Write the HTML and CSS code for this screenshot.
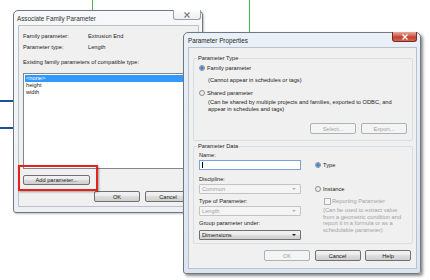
FILE: index.html
```html
<!DOCTYPE html>
<html lang="en">
<head>
    <meta charset="UTF-8">
    <title>Associate Family Parameter</title>
    <link rel="stylesheet" href="styles.css">
</head>
<body>
<div class="desk">
    <!-- sketch lines behind the dialogs -->
    <span class="wire wire-green wire-a"></span>
    <span class="wire wire-green wire-b"></span>
    <span class="wire wire-blue wire-c"></span>
    <span class="wire wire-blue wire-d"></span>
    <span class="grip grip-c"></span>
    <span class="grip grip-d"></span>

    <div class="window assoc">
        <div class="titlebar">
            <span class="title">Associate Family Parameter</span>
            <span class="close close-idle">
                <svg width="8" height="6" viewBox="0 0 8 6"><path d="M1.5 0.5 L6.5 5.5 M6.5 0.5 L1.5 5.5" stroke="#7d7d7d" stroke-width="1.2" fill="none"/></svg>
            </span>
        </div>
        <div class="panel">
            <div class="info-row"><span class="info-label">Family parameter:</span><span>Extrusion End</span></div>
            <div class="info-row"><span class="info-label">Parameter type:</span><span>Length</span></div>
            <div class="list-caption">Existing family parameters of compatible type:</div>
            <ul class="listbox">
                <li class="selected">&lt;none&gt;</li>
                <li>height</li>
                <li>width</li>
            </ul>
            <div class="add-row"><button class="btn btn-add">Add parameter...</button></div>
            <div class="footer">
                <button class="btn">OK</button>
                <button class="btn">Cancel</button>
            </div>
            <span class="callout"></span>
        </div>
    </div>

    <div class="window props">
        <div class="titlebar">
            <span class="title">Parameter Properties</span>
            <span class="close close-hot">
                <svg width="8" height="6" viewBox="0 0 8 6"><path d="M1.5 0.5 L6.5 5.5 M6.5 0.5 L1.5 5.5" stroke="#fff" stroke-width="1.4" fill="none"/></svg>
            </span>
        </div>
        <div class="panel">
            <fieldset class="group group-type">
                <legend>Parameter Type</legend>
                <div class="option"><span class="radio on"></span>Family parameter</div>
                <div class="hint">(Cannot appear in schedules or tags)</div>
                <div class="option option-shared"><span class="radio"></span>Shared parameter</div>
                <div class="hint hint-shared">(Can be shared by multiple projects and families, exported to ODBC, and<br>appear in schedules and tags)</div>
                <div class="group-buttons">
                    <button class="btn" disabled>Select...</button>
                    <button class="btn" disabled>Export...</button>
                </div>
            </fieldset>

            <fieldset class="group group-data">
                <legend>Parameter Data</legend>
                <div class="data-cols">
                    <div class="fields">
                        <div class="field-label">Name:</div>
                        <div class="textbox"><span class="caret"></span></div>
                        <div class="field-label spaced">Discipline:</div>
                        <div class="dropdown disabled">Common</div>
                        <div class="field-label">Type of Parameter:</div>
                        <div class="dropdown disabled">Length</div>
                        <div class="field-label">Group parameter under:</div>
                        <div class="dropdown">Dimensions</div>
                    </div>
                    <div class="scope">
                        <div class="option option-type"><span class="radio on"></span>Type</div>
                        <div class="option option-instance"><span class="radio"></span>Instance</div>
                        <div class="check-row"><span class="checkbox"></span>Reporting Parameter</div>
                        <div class="scope-note">(Can be used to extract value<br>from a geometric condition and<br>report it in a formula or as a<br>schedulable parameter)</div>
                    </div>
                </div>
            </fieldset>

            <div class="footer">
                <button class="btn" disabled>OK</button>
                <button class="btn">Cancel</button>
                <button class="btn">Help</button>
            </div>
        </div>
    </div>
</div>
</body>
</html>
```

FILE: styles.css
```css
* {
    box-sizing: border-box;
}

html, body {
    margin: 0;
    padding: 0;
}

body {
    width: 430px;
    height: 280px;
    overflow: hidden;
    background-color: #fff;
    font-family: "Liberation Sans", Arial, sans-serif;
    font-size: 5.7px;
    color: #1b1b1b;
}

.desk {
    position: relative;
    width: 430px;
    height: 280px;
}

/* sketch lines */
.wire {
    position: absolute;
    display: block;
}

.wire-green {
    width: 1px;
    background-color: #48b04f;
}

.wire-a {
    left: 92px;
    top: 0;
    height: 10px;
}

.wire-b {
    left: 249px;
    top: 0;
    height: 32px;
}

.wire-blue {
    height: 2px;
    left: 0;
    width: 14px;
    background-color: #1d4f9c;
}

.wire-c {
    top: 100px;
}

.wire-d {
    top: 127px;
}

.grip {
    position: absolute;
    left: 13px;
    width: 4px;
    height: 5px;
    background-color: #8fb4e4;
}

.grip-c {
    top: 99px;
}

.grip-d {
    top: 126px;
}

/* windows */
.window {
    position: absolute;
    border: 1px solid #6f7780;
    border-radius: 5px 5px 3px 3px;
    display: flex;
    flex-direction: column;
}

.assoc {
    left: 13px;
    top: 10px;
    width: 190px;
    height: 203px;
    padding: 0 3px 5px 4px;
    background: linear-gradient(#f7f8fa, #eceff3);
    box-shadow: 1px 1px 2px rgba(0, 0, 0, 0.25);
}

.props {
    left: 183px;
    top: 32px;
    width: 238px;
    height: 242px;
    padding: 0 3px 4px 4px;
    background: linear-gradient(#e9f0f8, #dbe5f1);
    box-shadow: 2px 2px 3px rgba(0, 0, 0, 0.45);
}

.titlebar {
    height: 14px;
    display: flex;
    align-items: center;
    flex: none;
}

.title {
    font-size: 6.3px;
    color: #1e1e1e;
}

.assoc .title {
    margin-left: -1px;
    color: #333;
}

.close {
    position: absolute;
    top: -1px;
    display: flex;
    align-items: center;
    justify-content: center;
    height: 10px;
    border-radius: 0 0 3px 3px;
}

.close-idle {
    right: 1px;
    width: 28px;
    border: 1px solid #9a9fa6;
    border-top: none;
    background: linear-gradient(#fdfdfd, #eceef0);
}

.close-hot {
    right: 3px;
    width: 25px;
    border: 1px solid #7b2a20;
    border-top: none;
    background: linear-gradient(#e9a99c, #d0604f 45%, #c0402c 55%, #cf6a55);
}

.panel {
    position: relative;
    flex: 1;
    background-color: #f0f0f0;
    border: 1px solid #b9c2cc;
}

/* associate dialog */
.assoc .panel {
    padding: 5px 7px 0 4px;
}

.info-row {
    display: flex;
    height: 11px;
    line-height: 11px;
}

.info-label {
    width: 65px;
}

.list-caption {
    margin-top: 5px;
    line-height: 8px;
}

.listbox {
    list-style: none;
    margin: 7px 0 0 0;
    padding: 1px 0 0 1px;
    width: 171px;
    height: 96px;
    background-color: #fff;
    border: 1px solid #828790;
}

.listbox li {
    height: 6.8px;
    line-height: 6.8px;
    padding-left: 1px;
}

.listbox .selected {
    background-color: #3399ff;
    color: #fff;
    width: 165px;
}

.add-row {
    margin-top: 6px;
}

.btn {
    height: 11px;
    width: 46px;
    padding: 0;
    font-family: inherit;
    font-size: 5.7px;
    color: #1b1b1b;
    border: 1px solid #707070;
    border-radius: 2px;
    background: linear-gradient(#f3f3f3, #ebebeb 45%, #dddddd 50%, #cfcfcf);
}

.btn:disabled {
    color: #a3a3a3;
    border-color: #adb2b5;
    background: #f4f4f4;
}

.btn-add {
    width: 67px;
    height: 10px;
}

.assoc .footer {
    display: flex;
    justify-content: flex-end;
    gap: 5px;
    margin-top: 6px;
}

.callout {
    position: absolute;
    left: -1px;
    top: 139px;
    width: 80px;
    height: 26px;
    border: 2px solid #e3211d;
    box-shadow: 1px 1px 2px rgba(0, 0, 0, 0.35);
}

/* parameter properties dialog */
.props .panel {
    padding: 6px 5px 0 4px;
}

.group {
    margin: 0;
    width: 220px;
    padding: 0 5px 6px 4px;
    border: 1px solid #d5dfe5;
    border-radius: 2px;
}

.group legend {
    padding: 0 1px;
    margin-left: -1px;
    line-height: 8px;
    color: #222;
}

.option {
    display: flex;
    align-items: center;
    gap: 2px;
    height: 8px;
    margin-top: 2px;
}

.radio {
    flex: none;
    width: 6px;
    height: 6px;
    margin-left: 1px;
    border-radius: 50%;
    border: 1px solid #8e8f8f;
    background: radial-gradient(circle, #ffffff, #d6d6d6);
}

.radio.on {
    background: radial-gradient(circle, #2f7fd8 0, #3a86da 1.3px, #a8c8ee 2.2px, #eef3fa 3px);
}

.hint {
    margin-top: 4px;
    margin-left: 10px;
    line-height: 8px;
}

.option-shared {
    margin-top: 5px;
}

.hint-shared {
    margin-top: 2px;
    line-height: 7px;
}

.group-buttons {
    display: flex;
    justify-content: flex-end;
    gap: 5px;
    margin-top: 10px;
}

.group-data {
    margin-top: 1px;
    padding-bottom: 3px;
}

.data-cols {
    display: flex;
    gap: 13px;
}

.fields {
    width: 102px;
    margin-left: 1px;
}

.field-label {
    line-height: 8px;
    margin-top: 3px;
}

.fields .field-label:first-child {
    margin-top: 1px;
}

.field-label.spaced {
    margin-top: 5px;
}

.textbox {
    position: relative;
    height: 10px;
    margin-top: 1px;
    background-color: #fff;
    border: 1px solid #7da2ce;
}

.caret {
    position: absolute;
    left: 2px;
    top: 1px;
    width: 1px;
    height: 6px;
    background-color: #000;
}

.dropdown {
    position: relative;
    height: 10px;
    margin-top: 1px;
    padding-left: 2px;
    line-height: 8px;
    border: 1px solid #707070;
    border-radius: 1px;
    background: linear-gradient(#f2f2f2, #ebebeb 45%, #dddddd 50%, #cfcfcf);
}

.dropdown::after {
    content: "";
    position: absolute;
    right: 4px;
    top: 3px;
    border-left: 2px solid transparent;
    border-right: 2px solid transparent;
    border-top: 2.5px solid #1b1b1b;
}

.dropdown.disabled {
    color: #a3a3a3;
    border-color: #c3c3c3;
    background: #f4f4f4;
}

.dropdown.disabled::after {
    border-top-color: #b5b5b5;
}

.fields .dropdown.disabled:nth-of-type(2) {
    margin-top: 2px;
}

.fields .dropdown:last-child {
    margin-top: 3px;
}

.scope {
    flex: 1;
}

.option-type {
    margin-top: 11px;
}

.option-instance {
    margin-top: 16px;
}

.check-row {
    display: flex;
    align-items: center;
    gap: 1px;
    height: 8px;
    margin-top: 4px;
    margin-left: 10px;
    color: #a3a3a3;
}

.checkbox {
    width: 7px;
    height: 7px;
    border: 1px solid #b1b1b1;
    background-color: #f4f4f4;
}

.scope-note {
    margin-top: 2px;
    margin-left: 9px;
    line-height: 6.7px;
    color: #a3a3a3;
}

.props .footer {
    display: flex;
    justify-content: flex-end;
    gap: 4.5px;
    margin-top: 6px;
}
```
